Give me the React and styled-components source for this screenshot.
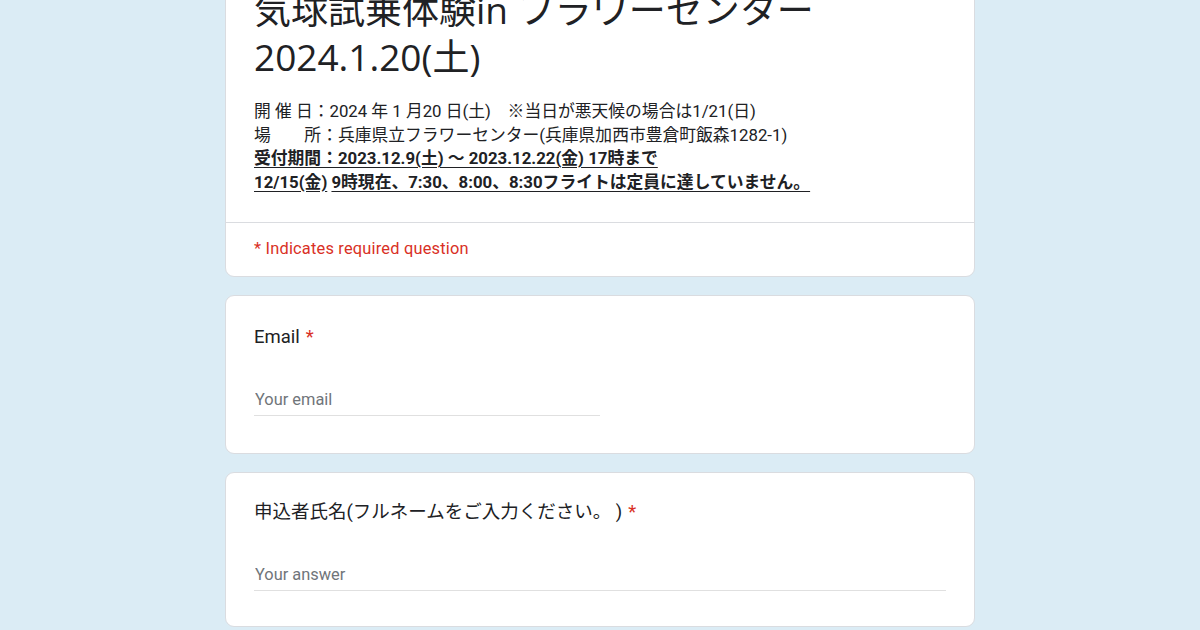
import React from 'react';
import styled, { createGlobalStyle } from 'styled-components';

const GlobalStyle = createGlobalStyle`
  html, body {
    margin: 0;
    padding: 0;
    background: #dbecf5;
  }
  body {
    font-family: Roboto, "Noto Sans CJK JP", sans-serif;
    color: #202124;
    overflow: hidden;
  }
`;

const Page = styled.main`
  width: 100%;
  height: 630px;
  overflow: hidden;
`;

const Column = styled.div`
  width: 750px;
  margin: 0 auto;
  /* the form is scrolled: the top of the title card sits above the viewport */
  margin-top: -41px;
  display: flex;
  flex-direction: column;
  gap: 18px;
`;

const Card = styled.section`
  background: #fff;
  border: 1px solid #dadce0;
  border-radius: 9px;
  overflow: hidden;
`;

const Header = styled.div`
  padding: 26px 28px 28px;
`;

const Title = styled.h1`
  margin: 0 0 20px;
  font-family: "Open Sans", "Noto Sans CJK JP", sans-serif;
  font-weight: 400;
  font-size: 37px;
  line-height: 47px;
  color: #202124;
`;

const Description = styled.div`
  font-size: 16.8px;
  line-height: 23.6px;
  color: #202124;
`;

const Line = styled.div`
  white-space: nowrap;
  font-weight: ${p => (p.$bold ? 700 : 400)};
`;

const Under = styled.span`
  text-decoration: underline;
  text-underline-offset: 3px;
`;

const Divider = styled.hr`
  margin: 0;
  border: 0;
  border-top: 1px solid #dadce0;
`;

const RequiredNote = styled.div`
  padding: 14px 28px 15px;
  font-size: 16.4px;
  line-height: 23.4px;
  letter-spacing: 0.2px;
  color: #d93025;
`;

const Question = styled.div`
  padding: ${p => (p.$tight ? '25px 28px 35px' : '27px 28px 37px')};
`;

const QuestionTitle = styled.div`
  font-size: 18.5px;
  line-height: 28px;
  color: #202124;
  white-space: nowrap;
`;

const Star = styled.span`
  color: #d93025;
  margin-left: 6px;
`;

const AnswerInput = styled.input`
  display: block;
  box-sizing: border-box;
  width: ${p => (p.$half ? '50%' : '100%')};
  height: 32px;
  margin-top: 33px;
  padding: 0 1px;
  border: 0;
  border-bottom: 1px solid #e0e0e0;
  outline: none;
  background: transparent;
  font-family: Roboto, "Noto Sans CJK JP", sans-serif;
  font-size: 16.4px;
  color: #202124;

  &::placeholder {
    color: #70757a;
  }
`;

function ShortAnswer({ label, placeholder, half, tight }) {
  return (
    <Card>
      <Question $tight={tight}>
        <QuestionTitle>
          {label}
          <Star>*</Star>
        </QuestionTitle>
        <AnswerInput $half={half} placeholder={placeholder} />
      </Question>
    </Card>
  );
}

export default function App() {
  return (
    <Page>
      <GlobalStyle />
      <Column>
        <Card>
          <Header>
            <Title>
              気球試乗体験in フラワーセンター
              <br />
              2024.1.20(土)
            </Title>
            <Description>
              <Line>開 催 日：2024 年 1 月20 日(土)　※当日が悪天候の場合は1/21(日)</Line>
              <Line>場　　所：兵庫県立フラワーセンター(兵庫県加西市豊倉町飯森1282-1)</Line>
              <Line $bold>
                <Under>受付期間：2023.12.9(土) ～ 2023.12.22(金) 17時まで</Under>
              </Line>
              <Line $bold>
                <Under>12/15(金)</Under> <Under>9時現在、7:30、8:00、8:30フライトは定員に達していません。</Under>
              </Line>
            </Description>
          </Header>
          <Divider />
          <RequiredNote>* Indicates required question</RequiredNote>
        </Card>

        <ShortAnswer label="Email" placeholder="Your email" half />
        <ShortAnswer
          label="申込者氏名(フルネームをご入力ください。 )"
          placeholder="Your answer"
          tight
        />
      </Column>
    </Page>
  );
}
